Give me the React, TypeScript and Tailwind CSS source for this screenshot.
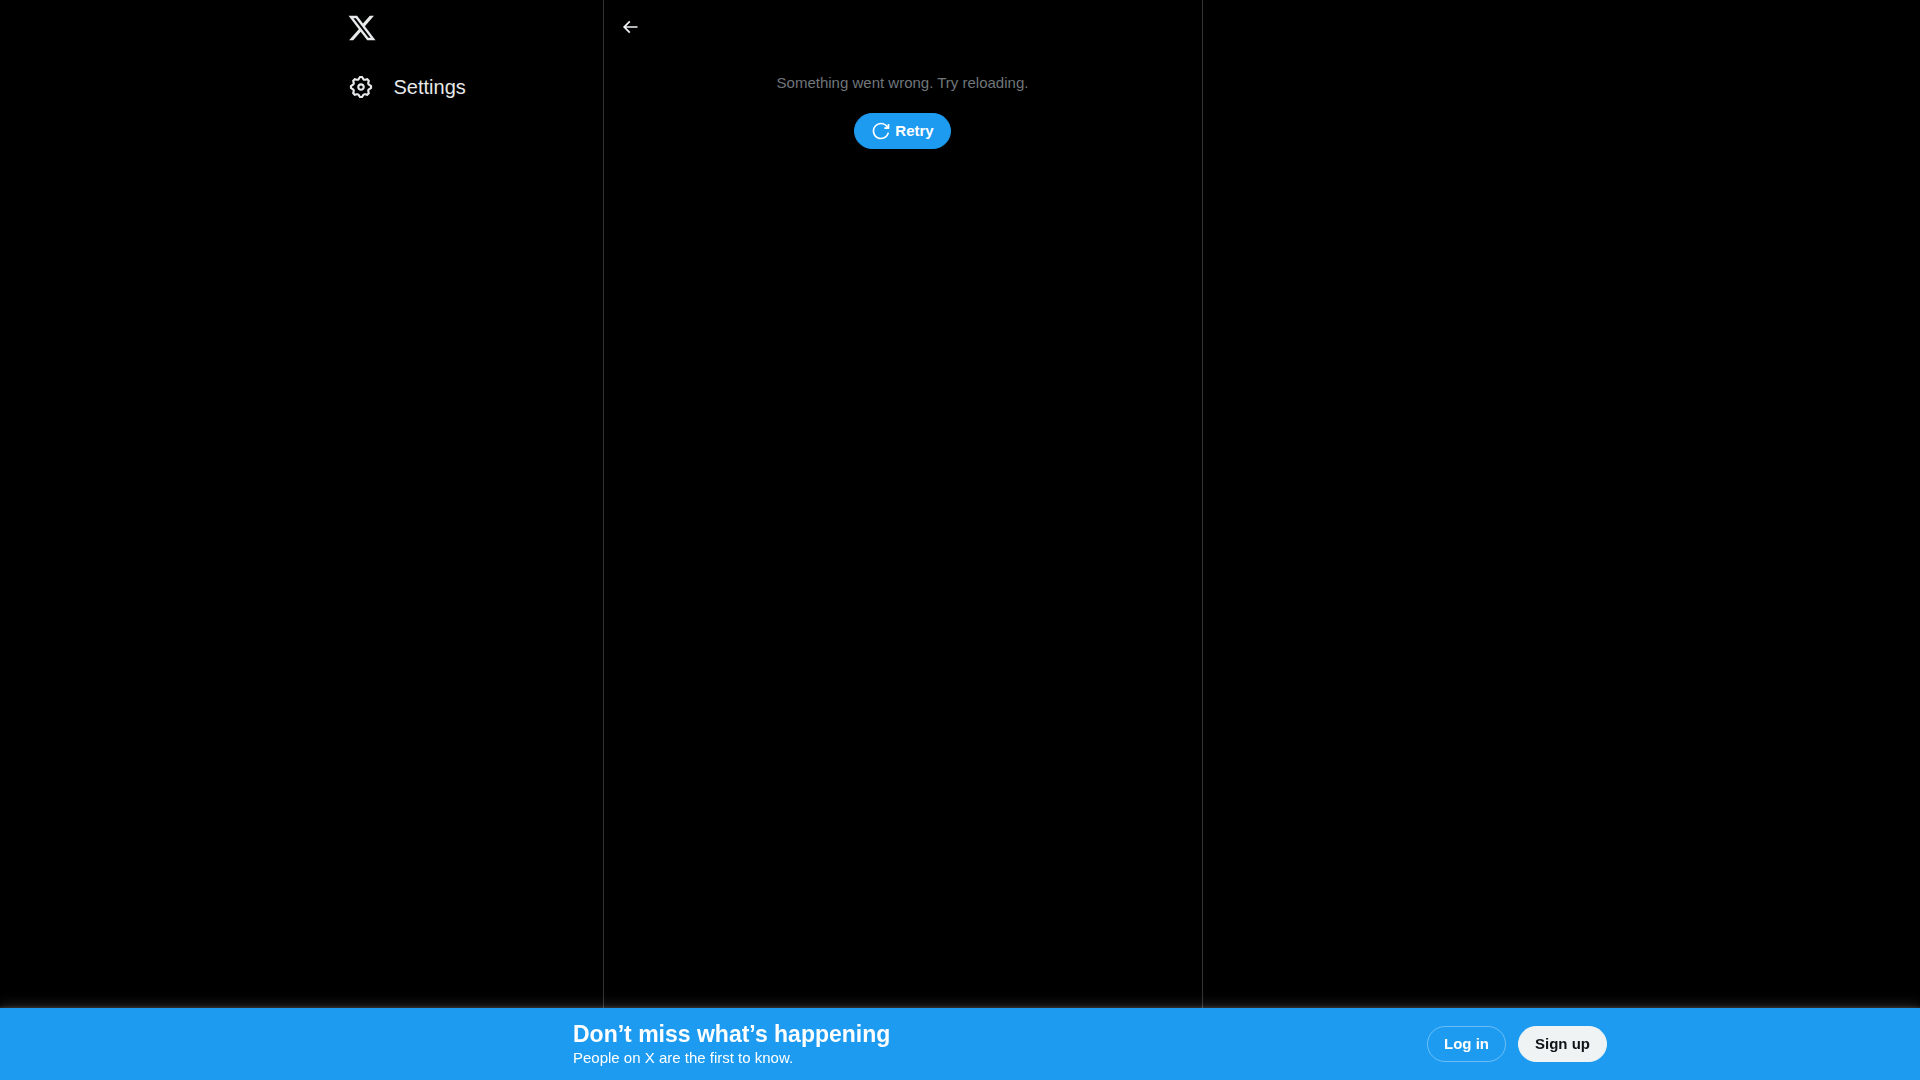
import React from "react";

function Icon({ path, className }: { path: string; className: string }) {
  return (
    <svg viewBox="0 0 24 24" aria-hidden="true" className={className} fill="currentColor">
      <path d={path} />
    </svg>
  );
}

const LOGO =
  "M18.244 2.25h3.308l-7.227 8.26 8.502 11.24H16.17l-5.214-6.817L4.99 21.75H1.68l7.73-8.835L1.254 2.25H8.08l4.713 6.231zm-1.161 17.52h1.833L7.084 4.126H5.117z";
const GEAR =
  "M10.54 1.75h2.92l1.57 2.36c.11.17.32.25.53.21l2.53-.59 2.17 2.17-.58 2.54c-.05.2.04.41.21.53l2.36 1.57v2.92l-2.36 1.57c-.17.12-.26.33-.21.53l.58 2.54-2.17 2.17-2.53-.59c-.21-.04-.42.04-.53.21l-1.57 2.36h-2.92l-1.58-2.36c-.11-.17-.32-.25-.52-.21l-2.54.59-2.17-2.17.58-2.54c.05-.2-.03-.41-.21-.53l-2.35-1.57v-2.92L4.1 8.97c.18-.12.26-.33.21-.53L3.73 5.9 5.9 3.73l2.54.59c.2.04.41-.04.52-.21l1.58-2.36zm1.07 2l-.98 1.47C10.05 6.08 9 6.5 7.99 6.27l-1.46-.34-.6.6.33 1.46c.24 1.01-.18 2.07-1.05 2.64l-1.46.98v.78l1.46.98c.87.57 1.29 1.63 1.05 2.64l-.33 1.46.6.6 1.46-.34c1.01-.23 2.06.19 2.64 1.05l.98 1.47h.78l.97-1.47c.58-.86 1.63-1.28 2.65-1.05l1.45.34.61-.6-.34-1.46c-.23-1.01.18-2.07 1.05-2.64l1.47-.98v-.78l-1.47-.98c-.87-.57-1.28-1.63-1.05-2.64l.34-1.46-.61-.6-1.45.34c-1.02.23-2.07-.19-2.65-1.05l-.97-1.47h-.78zM12 10.5c-.83 0-1.5.67-1.5 1.5s.67 1.5 1.5 1.5c.82 0 1.5-.67 1.5-1.5s-.68-1.5-1.5-1.5zM8.5 12c0-1.93 1.56-3.5 3.5-3.5 1.93 0 3.5 1.57 3.5 3.5s-1.57 3.5-3.5 3.5c-1.94 0-3.5-1.57-3.5-3.5z";
const BACK =
  "M7.414 13l5.043 5.04-1.414 1.42L3.586 12l7.457-7.46 1.414 1.42L7.414 11H21v2H7.414z";
const RELOAD =
  "M12 4c-4.418 0-8 3.58-8 8s3.582 8 8 8c3.806 0 6.993-2.66 7.802-6.22l1.95.44C20.742 18.67 16.76 22 12 22 6.477 22 2 17.52 2 12S6.477 2 12 2c3.272 0 6.176 1.57 8 4V3.5h2v6h-6v-2h2.616C17.175 5.39 14.749 4 12 4z";

function SideNav() {
  return (
    <header className="w-[275px] shrink-0 px-2 text-[#e7e9ea]">
      <a href="#home" aria-label="X" className="flex h-14 w-fit items-center px-[11px]">
        <Icon path={LOGO} className="size-[30px]" />
      </a>
      <nav className="mt-1.5">
        <a href="#settings" className="flex w-fit items-center gap-5 p-3">
          <Icon path={GEAR} className="size-[26px]" />
          <span className="text-xl leading-6">Settings</span>
        </a>
      </nav>
    </header>
  );
}

function ErrorColumn() {
  return (
    <section className="flex w-full max-w-[600px] flex-col border-x border-[#2f3336]">
      <div className="flex h-[53px] items-center px-4">
        <button type="button" aria-label="Back" className="text-[#eff3f4]">
          <Icon path={BACK} className="size-5" />
        </button>
      </div>
      <div className="flex flex-col items-center gap-5 p-5">
        <p className="text-[15px] leading-5 text-[#71767b]">Something went wrong. Try reloading.</p>
        <button
          type="button"
          className="flex h-9 items-center gap-1 rounded-full border border-[#1d9bf0] bg-[#1d9bf0] px-4 text-[15px] leading-5 font-bold text-white"
        >
          <Icon path={RELOAD} className="size-5" />
          Retry
        </button>
      </div>
    </section>
  );
}

function SignupBar() {
  return (
    <footer className="fixed inset-x-0 bottom-0 bg-[#1d9bf0] py-3 text-white shadow-[0_0_15px_rgba(255,255,255,0.2),0_0_3px_1px_rgba(255,255,255,0.15)]">
      <div className="mx-auto flex max-w-[1294px] items-center justify-between">
        <div className="pl-[260px]">
          <h2 className="text-[23px] leading-7 font-bold">Don’t miss what’s happening</h2>
          <p className="text-[15px] leading-5">People on X are the first to know.</p>
        </div>
        <div className="flex gap-3 text-[15px] leading-5 font-bold">
          <a
            href="#login"
            className="flex h-9 items-center rounded-full border border-white/35 px-4"
          >
            Log in
          </a>
          <a
            href="#signup"
            className="flex h-9 items-center rounded-full border border-[#eff3f4] bg-[#eff3f4] px-4 text-[#0f1419]"
          >
            Sign up
          </a>
        </div>
      </div>
    </footer>
  );
}

export default function App() {
  return (
    <div className="min-h-screen bg-black font-['Liberation_Sans',Arial,sans-serif]">
      <main className="mx-auto flex min-h-screen max-w-[1265px]">
        <SideNav />
        <ErrorColumn />
      </main>
      <SignupBar />
    </div>
  );
}
